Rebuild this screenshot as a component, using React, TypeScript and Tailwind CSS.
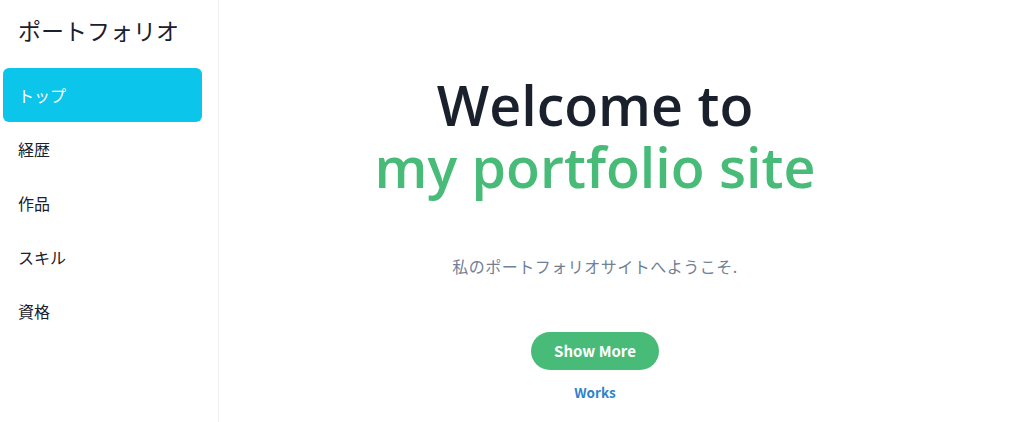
import React from "react";

const jp = { fontFamily: '"Noto Sans CJK JP", "Noto Sans", sans-serif' };
const head = { fontFamily: '"Open Sans", "Noto Sans", sans-serif' };

const items = ["トップ", "経歴", "作品", "スキル", "資格"];

export default function App() {
  return (
    <div className="flex h-[422px] w-[1024px] bg-white overflow-hidden" style={jp}>
      <aside className="w-[219px] shrink-0 border-r border-[#edf0f5] h-full">
        <div className="pl-[18px] pt-[16px] h-[68px] text-[23px] leading-[28px] text-[#1a202c]">
          ポートフォリオ
        </div>
        <nav className="flex flex-col px-[3px] pr-[16px]">
          {items.map((it, i) => (
            <div
              key={it}
              className={
                i === 0
                  ? "h-[54px] flex items-center pl-[15px] rounded-[6px] bg-[#0bc5ea] text-white text-[16px]"
                  : "h-[54px] flex items-center pl-[15px] text-[#1a202c] text-[16px]"
              }
            >
              {it}
            </div>
          ))}
        </nav>
      </aside>
      <main className="flex-1 flex">
        <div className="w-[752px] flex flex-col items-center pt-[74px]">
          <h1 className="text-center font-semibold text-[55.5px] leading-[62px]" style={head}>
            <span className="block text-[#1a202c]">Welcome to</span>
            <span className="block text-[#48bb78]">my portfolio site</span>
          </h1>
          <p className="mt-[56px] text-[16px] leading-[24px] tracking-[0.5px] text-[#718096]">
            私のポートフォリオサイトへようこそ.
          </p>
          <button className="mt-[54px] h-[38px] px-[23px] rounded-full bg-[#48bb78] text-white text-[15px] font-bold">
            Show More
          </button>
          <a className="mt-[12px] text-[13.5px] leading-[20px] font-semibold text-[#3182ce]">Works</a>
        </div>
      </main>
    </div>
  );
}
